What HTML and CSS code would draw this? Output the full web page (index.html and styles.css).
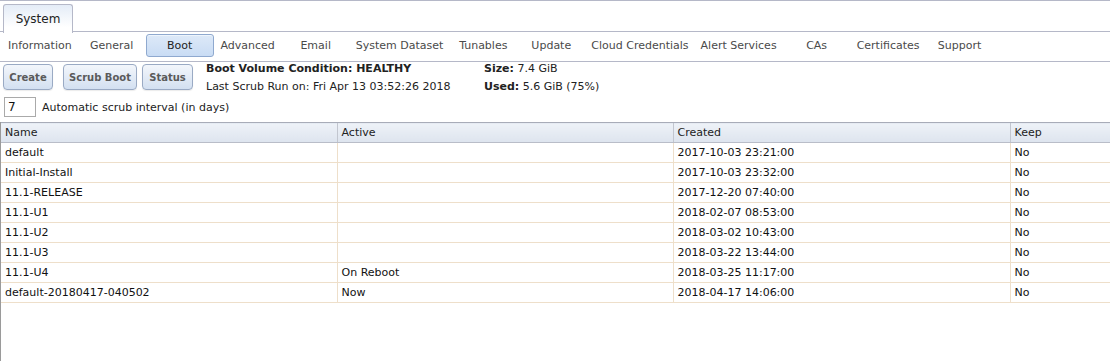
FILE: index.html
```html
<!DOCTYPE html>
<html lang="en">
<head>
    <meta charset="UTF-8">
    <title>System - Boot</title>
    <link rel="stylesheet" href="styles.css">
</head>
<body>
    <div class="tabbar">
        <div class="tab">System</div>
    </div>

    <nav class="subnav">
        <span class="nav-item">Information</span>
        <span class="nav-item">General</span>
        <span class="nav-item active">Boot</span>
        <span class="nav-item">Advanced</span>
        <span class="nav-item">Email</span>
        <span class="nav-item">System Dataset</span>
        <span class="nav-item">Tunables</span>
        <span class="nav-item">Update</span>
        <span class="nav-item">Cloud Credentials</span>
        <span class="nav-item">Alert Services</span>
        <span class="nav-item">CAs</span>
        <span class="nav-item">Certificates</span>
        <span class="nav-item">Support</span>
    </nav>

    <div class="toolbar">
        <div class="actions">
            <div class="buttons">
                <button class="btn btn-create">Create</button>
                <button class="btn btn-scrub">Scrub Boot</button>
                <button class="btn btn-status">Status</button>
            </div>
            <div class="interval">
                <input type="text" value="7" class="interval-input">
                <label>Automatic scrub interval (in days)</label>
            </div>
        </div>
        <div class="status-info">
            <p><b>Boot Volume Condition: HEALTHY</b></p>
            <p>Last Scrub Run on: Fri Apr 13 03:52:26 2018</p>
        </div>
        <div class="size-info">
            <p><b>Size:</b> 7.4 GiB</p>
            <p><b>Used:</b> 5.6 GiB (75%)</p>
        </div>
    </div>

    <div class="grid">
        <table>
            <colgroup>
                <col class="col-name">
                <col class="col-active">
                <col class="col-created">
                <col>
            </colgroup>
            <thead>
                <tr>
                    <th>Name</th>
                    <th>Active</th>
                    <th>Created</th>
                    <th>Keep</th>
                </tr>
            </thead>
            <tbody>
                <tr><td>default</td><td></td><td>2017-10-03 23:21:00</td><td>No</td></tr>
                <tr><td>Initial-Install</td><td></td><td>2017-10-03 23:32:00</td><td>No</td></tr>
                <tr><td>11.1-RELEASE</td><td></td><td>2017-12-20 07:40:00</td><td>No</td></tr>
                <tr><td>11.1-U1</td><td></td><td>2018-02-07 08:53:00</td><td>No</td></tr>
                <tr><td>11.1-U2</td><td></td><td>2018-03-02 10:43:00</td><td>No</td></tr>
                <tr><td>11.1-U3</td><td></td><td>2018-03-22 13:44:00</td><td>No</td></tr>
                <tr><td>11.1-U4</td><td>On Reboot</td><td>2018-03-25 11:17:00</td><td>No</td></tr>
                <tr><td>default-20180417-040502</td><td>Now</td><td>2018-04-17 14:06:00</td><td>No</td></tr>
            </tbody>
        </table>
    </div>
</body>
</html>
```

FILE: styles.css
```css
:root {
    --line-color: #b5b8c8;
    --row-line: #eedfca;
    --text-color: #222;
    --nav-text: #4a4a4a;
}

* {
    margin: 0;
    padding: 0;
    box-sizing: border-box;
}

body {
    font-family: 'DejaVu Sans', Verdana, sans-serif;
    font-size: 11px;
    color: var(--text-color);
    background-color: #fff;
    height: 361px;
    overflow: hidden;
}

.tabbar {
    height: 32px;
    padding: 3px 0 0 3px;
    border-top: 1px solid var(--line-color);
    border-bottom: 1px solid var(--line-color);
}

.tab {
    width: 70px;
    height: 29px;
    line-height: 28px;
    text-align: center;
    font-size: 12px;
    color: #222;
    border: 1px solid var(--line-color);
    border-bottom: none;
    border-radius: 3px 3px 0 0;
    background: linear-gradient(to bottom, #e4ecf7, #fff 80%);
}

.subnav {
    display: flex;
    align-items: center;
    height: 30px;
    padding: 0 0 2px 2px;
    border-bottom: 1px solid var(--line-color);
}

.nav-item {
    min-width: 68px;
    height: 23px;
    line-height: 21px;
    padding: 0 5px;
    text-align: center;
    color: var(--nav-text);
    font-size: 11px;
    border: 1px solid transparent;
    white-space: nowrap;
}

.nav-item.active {
    color: #222;
    background: linear-gradient(to bottom, #dde9f8, #c9dcf4);
    border-color: #8fa9cf;
    border-radius: 3px;
    box-shadow: inset 0 1px 0 #eef4fc;
}

.toolbar {
    display: flex;
    height: 60px;
}

.actions {
    width: 206px;
}

.buttons {
    display: flex;
    padding: 2px 0 0 3px;
}

.btn {
    height: 26px;
    padding: 0;
    font-family: inherit;
    font-size: 10px;
    font-weight: bold;
    color: #5a5a5a;
    white-space: nowrap;
    border: 1px solid #9aaac4;
    border-radius: 4px;
    background: linear-gradient(to bottom, #f3f6fb, #d3e0f1);
    box-shadow: 0 1px 1px rgba(0, 0, 0, 0.08);
    cursor: pointer;
}

.btn-create {
    width: 50px;
    margin-right: 10px;
}

.btn-scrub {
    width: 74px;
    margin-right: 5px;
}

.btn-status {
    width: 51px;
}

.interval {
    display: flex;
    align-items: center;
    margin-top: 7px;
    padding-left: 4px;
    white-space: nowrap;
}

.interval-input {
    width: 32px;
    height: 20px;
    padding: 0 3px;
    font-family: inherit;
    font-size: 12px;
    color: #111;
    border: 1px solid #aaa;
    margin-right: 6px;
}

.status-info {
    width: 278px;
    margin-top: -2px;
}

.size-info {
    margin-top: -2px;
}

.status-info p,
.size-info p {
    line-height: 18px;
    white-space: nowrap;
}

.grid {
    height: 240px;
    border-left: 1px solid #9a9a9a;
}

table {
    width: 100%;
    table-layout: fixed;
    border-collapse: collapse;
}

.col-name {
    width: 336px;
}

.col-active {
    width: 336px;
}

.col-created {
    width: 337px;
}

th {
    height: 20px;
    padding: 0 4px;
    text-align: left;
    font-weight: normal;
    color: #222;
    background: linear-gradient(to bottom, #eef2f8, #dde4ee);
    border-top: 1px solid #a8acb8;
    border-bottom: 1px solid #b9bdc8;
    border-left: 1px solid #c2c6cf;
}

th:first-child {
    border-left: none;
}

td {
    height: 20px;
    padding: 0 4px;
    color: #111;
    white-space: nowrap;
    border-bottom: 1px solid var(--row-line);
    border-left: 1px solid var(--row-line);
}

td:first-child {
    border-left: none;
}
```
